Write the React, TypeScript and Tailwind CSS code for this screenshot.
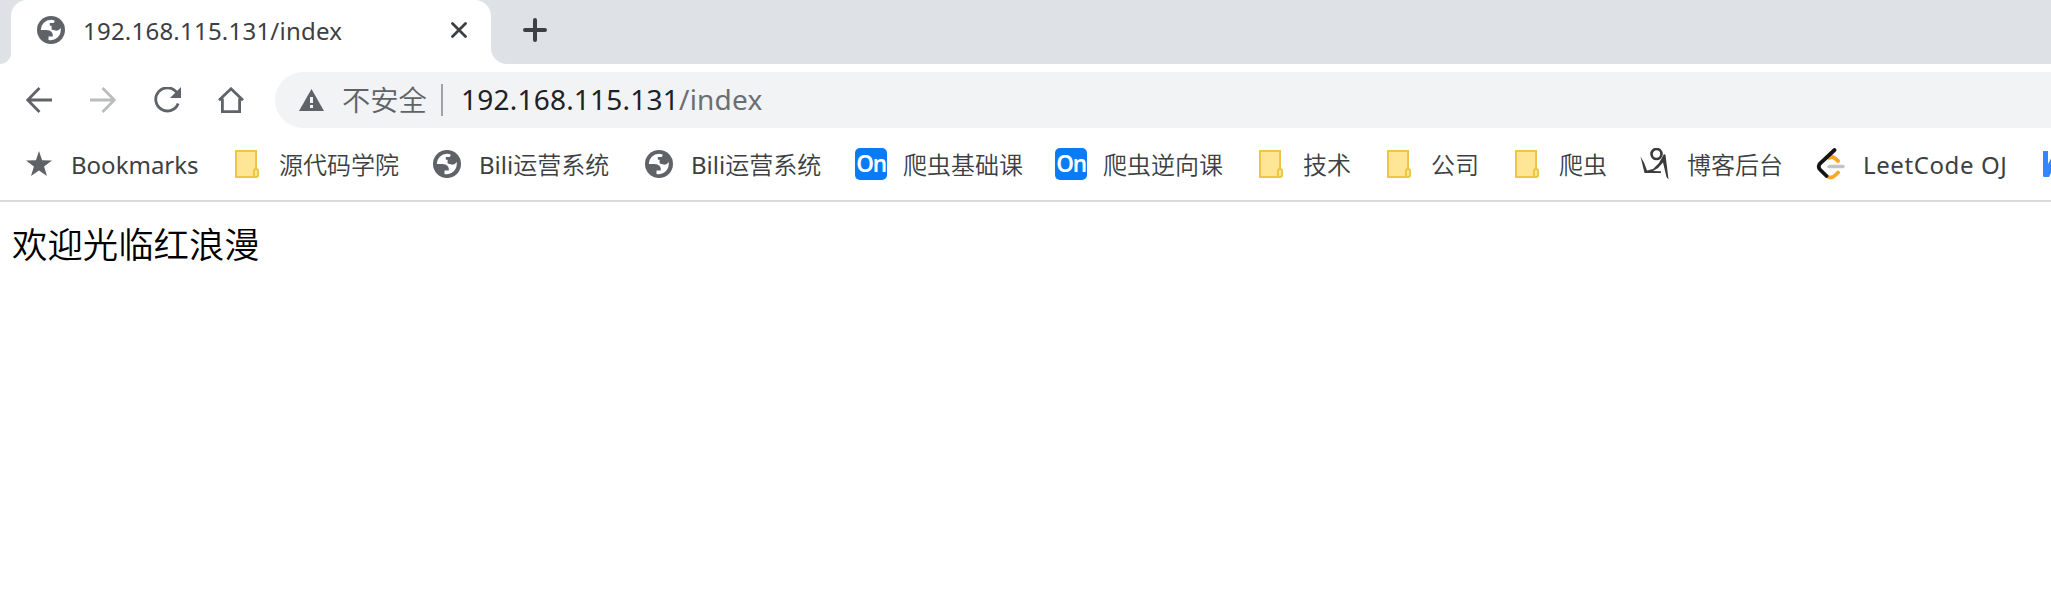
import type { ReactNode } from "react";

function Globe() {
  return (
    <svg width="28" height="28" viewBox="0 0 28 28">
      <circle cx="14" cy="14" r="14" fill="#5f6368" />
      <path
        fill="#fff"
        d="M3.8 14A10.2 10.2 0 0 1 14 3.8Q16 3.8 17.5 4.4V5.8Q17.5 7 15.7 7H12.8V9.8H14.6V13.4Q16.5 13.8 18.5 14.6Q22 15 23.7 12.1A10.2 10.2 0 0 1 11.5 23.9V20.6H15.8Q16.2 14 9.5 14Z"
      />
    </svg>
  );
}

function Folder() {
  return (
    <svg width="24" height="28" viewBox="0 0 24 28" fill="#ffe694" stroke="#ebc744" strokeWidth="2">
      <path d="M1 1H21V27H1Z" />
      <path d="M19 27V21Q19 19 21 19Q23 19 23 21V25Q23 27 21 27Z" />
    </svg>
  );
}

function OnBadge() {
  return (
    <span className="flex h-8 w-8 items-center justify-center rounded-[5px] bg-[#087bf5] pb-px font-['Noto_Sans',sans-serif] text-[22.5px] font-semibold leading-[31px] tracking-[-1.2px] text-white">
      On
    </span>
  );
}

function Star() {
  return (
    <svg width="26" height="26" viewBox="0 0 26 26" fill="#5f6368">
      <path d="M13 0 16.1 9.3 26 9.6 18.1 15.6 21 25 13 19.4 5 25 7.9 15.6 0 9.6 9.9 9.3Z" />
    </svg>
  );
}

function Figure() {
  return (
    <svg width="32" height="32" viewBox="0 0 32 32">
      <circle cx="17.5" cy="6" r="5" fill="none" stroke="#3c3a3a" strokeWidth="2.6" />
      <path fill="#3c3a3a" d="M1.5 8.5 5.2 15 8 22.5 14 21 20 15 25 6 26.5 7 28 19 29.5 31.5 27.5 29 24 14.5 19 20 14 23 22 23.2V25H5.5Z" />
    </svg>
  );
}

function LeetCode() {
  return (
    <svg width="32" height="32" viewBox="0 0 32 32" fill="none" strokeLinecap="round">
      <path stroke="#c4c4c4" strokeWidth="3.4" d="M14 18.5H28" />
      <path stroke="#fca62a" strokeWidth="3.8" d="M14 10Q17 8 19.5 10L23 13M23 24.5 20.5 27Q16.5 31 12.5 28.5" />
      <path stroke="#151515" strokeWidth="3.8" d="M19.5 2 5 15.5Q2.5 18.5 5 21.5L11.5 28" />
    </svg>
  );
}

function Kite() {
  return (
    <svg width="32" height="32" viewBox="0 0 32 32" fill="#3385ff">
      <path d="M4 3H9V16L16 3H22L10 29H5Q4 29 4 27Z" />
    </svg>
  );
}

type Bookmark = { icon: ReactNode; latin?: string; label?: string; style: string };

const bookmarks: Bookmark[] = [
  { icon: <Star />, latin: "Bookmarks", style: "w-32" },
  { icon: <Folder />, label: "源代码学院", style: "w-[120px]" },
  { icon: <Globe />, latin: "Bili", label: "运营系统", style: "w-[132px]" },
  { icon: <Globe />, latin: "Bili", label: "运营系统", style: "w-[132px]" },
  { icon: <OnBadge />, label: "爬虫基础课", style: "w-[120px]" },
  { icon: <OnBadge />, label: "爬虫逆向课", style: "w-[120px]" },
  { icon: <Folder />, label: "技术", style: "w-12" },
  { icon: <Folder />, label: "公司", style: "w-12" },
  { icon: <Folder />, label: "爬虫", style: "w-12" },
  { icon: <Figure />, label: "博客后台", style: "w-24" },
  { icon: <LeetCode />, latin: "LeetCode OJ", style: "w-36 tracking-[0.6px]" },
  { icon: <Kite />, style: "w-24" },
];

function TabStrip() {
  return (
    <header className="flex h-16 shrink-0 bg-white">
      <div className="w-[11px] rounded-br-[16px] bg-[#dee1e6]" />
      <div className="flex w-[480px] bg-[#dee1e6]">
        <div className="flex w-full items-center rounded-t-[16px] bg-white pb-1 pl-[26px] pr-[24px]">
          <Globe />
          <span className="ml-[18px] flex-1 pt-px text-[24px] leading-8 tracking-[0.22px] text-[#3c4043]">192.168.115.131/index</span>
          <svg width="16" height="16" viewBox="0 0 16 16" stroke="#3c4043" strokeWidth="2.8" strokeLinecap="round">
            <path d="M1.5 1.5 14.5 14.5M14.5 1.5 1.5 14.5" />
          </svg>
        </div>
      </div>
      <div className="flex flex-1 items-center rounded-bl-[16px] bg-[#dee1e6] pb-1 pl-8">
        <svg width="24" height="24" viewBox="0 0 24 24" stroke="#3c4043" strokeWidth="4" strokeLinecap="round">
          <path d="M12 2V22M2 12H22" />
        </svg>
      </div>
    </header>
  );
}

function Toolbar() {
  return (
    <nav className="flex h-[72px] shrink-0 items-center">
      <div className="flex w-[275px] items-center gap-[38px] pb-px pl-[26px]">
        <svg width="26" height="26" viewBox="0 0 26 26" fill="none" stroke="#5f6368" strokeWidth="2.8">
          <path d="M26 13H2M13.5 1 1.7 13 13.5 25" />
        </svg>
        <svg width="26" height="26" viewBox="0 0 26 26" fill="none" stroke="#babcbe" strokeWidth="2.8">
          <path d="M0 13H24M12.5 1 24.3 13 12.5 25" />
        </svg>
        <svg width="27" height="26" viewBox="0 0 27 26" fill="none">
          <path d="M22.5 5.2A11.6 11.6 0 1 0 24.2 16.5" stroke="#5f6368" strokeWidth="2.8" />
          <path d="M27 0V11H16Z" fill="#5f6368" />
        </svg>
        <svg className="-ml-px" width="26" height="26" viewBox="0 0 26 26" fill="none" stroke="#5f6368" strokeWidth="2.8">
          <path d="M1 13.2 13 1.8 25 13.2M4.4 11.5V24.6H21.6V11.5" />
        </svg>
      </div>
      <div className="flex h-14 flex-1 items-center rounded-l-[28px] bg-[#f1f3f4] pl-6">
        <svg width="25" height="22" viewBox="0 0 25 22">
          <path d="M12.5 0 25 22H0Z" fill="#5f6368" />
          <path d="M11 8H14V14H11ZM11 16H14V19H11Z" fill="#f1f3f4" />
        </svg>
        <span className="ml-[18px] w-[85px] whitespace-nowrap pb-px text-[28.3px] font-[350] leading-9 text-[#5f6368]">不安全</span>
        <span className="ml-[14px] h-8 w-0.5 bg-[#9fa3a7]" />
        <span className="ml-[18px] whitespace-nowrap pb-0.5 text-[28px] leading-9 tracking-[0.22px] text-[#202124]">
          192.168.115.131<span className="text-[#6b6f73]">/index</span>
        </span>
      </div>
    </nav>
  );
}

export default function App() {
  return (
    <div className="flex h-[592px] w-full flex-col overflow-hidden bg-white font-['Noto_Sans','Noto_Sans_CJK_SC',sans-serif]">
      <TabStrip />
      <Toolbar />
      <div className="flex h-[66px] shrink-0 gap-8 overflow-hidden border-b-2 border-[#dadada] pb-2 pl-[23px]">
        {bookmarks.map((b, i) => (
          <div key={i} className="flex shrink-0 items-center gap-4">
            <span className="flex w-8 justify-center">{b.icon}</span>
            <span className={"whitespace-nowrap pt-0.5 text-[24px] leading-8 text-[#3c4043] " + b.style}>
              {b.latin}
              {b.label && <span className="font-[350]">{b.label}</span>}
            </span>
          </div>
        ))}
      </div>
      <main className="pl-3 pt-4 font-['Noto_Sans_CJK_SC',sans-serif] text-[35.4px] font-[350] leading-[50px] text-black">欢迎光临红浪漫</main>
    </div>
  );
}
